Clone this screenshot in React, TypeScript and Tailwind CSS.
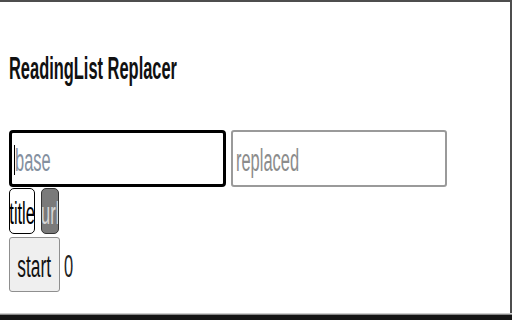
import React from "react";

const S = "inline-block whitespace-nowrap scale-x-[0.53]";

export default function App() {
  return (
    <div className="w-[512px] h-[320px] flex flex-col bg-white font-['Liberation_Sans',Arial,sans-serif] overflow-hidden">
      <div className="flex-1 flex flex-col border-t-2 border-r-2 border-[#4d4d4d] pl-[9px]">
        <div className="mt-[51px] h-[31px] leading-[31px] text-[31px] font-bold text-[#111]">
          <span className={S + " origin-left"}>ReadingList Replacer</span>
        </div>
        <div className="mt-[46px] flex gap-[5px]">
          <div className="w-[217px] h-[57px] border-[3px] border-black rounded-[4px] flex items-center pl-[2px] pt-[3px] overflow-hidden">
            <div className="w-px h-[30px] bg-black" />
            <span className={S + " origin-left text-[31px] leading-[31px] text-[#84909f]"}>base</span>
          </div>
          <div className="w-[216px] h-[57px] border-2 border-[#9a9a9a] rounded-[3px] flex items-center pl-[3px] pt-[3px] overflow-hidden">
            <span className={S + " origin-left text-[31px] leading-[31px] text-[#8c8c8c]"}>replaced</span>
          </div>
        </div>
        <div className="mt-[1px] flex gap-[6px]">
          <div className="w-[26px] h-[46px] bg-white border-[1.5px] border-black rounded-[5px] flex items-center justify-center pt-[5px] overflow-hidden">
            <span className={S + " origin-center text-[31px] leading-[31px] text-black scale-x-[0.5]"}>title</span>
          </div>
          <div className="w-[18px] h-[46px] bg-[#7a7a7a] border-[1.5px] border-[#333] rounded-[5px] flex items-center justify-center pt-[5px] overflow-hidden">
            <span className={S + " origin-center text-[31px] leading-[31px] text-[#d6d6d6] scale-x-[0.42]"}>url</span>
          </div>
        </div>
        <div className="mt-[3px] flex items-center gap-[4px]">
          <div className="w-[51px] h-[55px] bg-[#efefef] border border-[#8f8f8f] rounded-[3px] flex items-center justify-center pt-[4px] overflow-hidden">
            <span className={S + " origin-center text-[31px] leading-[31px] text-[#111] scale-x-[0.56]"}>start</span>
          </div>
          <div className="w-[10px] h-[55px] flex items-center pt-[4px]">
            <span className={S + " origin-left text-[31px] leading-[31px] text-[#222] scale-x-[0.5]"}>0</span>
          </div>
        </div>
      </div>
      <div className="h-px bg-[#cfcfcf]" />
      <div className="h-px bg-[#8a8a8a]" />
      <div className="h-[5px] bg-[#151515]" />
    </div>
  );
}
